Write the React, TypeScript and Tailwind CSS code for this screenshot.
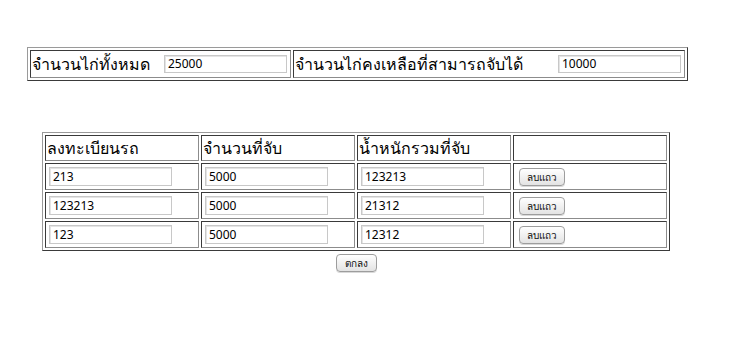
import React from 'react';

const rows = [
  { plate: '213', count: '5000', weight: '123213' },
  { plate: '123213', count: '5000', weight: '21312' },
  { plate: '123', count: '5000', weight: '12312' },
];

const cell = 'border border-t-[#3a3a3a] border-l-[#3a3a3a] border-b-[#8c8c8c] border-r-[#8c8c8c] p-px align-middle';
const table =
  'border-separate border-spacing-[2px] border border-t-[#9a9a9a] border-l-[#9a9a9a] border-b-[#3a3a3a] border-r-[#3a3a3a]';
const field =
  'm-[2px] h-[18px] w-[123px] border border-[#c8c8c8] bg-white px-[3px] text-[12px] text-black shadow-[inset_1px_1px_0_#e4e4e4] outline-none';

const Btn = ({ label, wide }: { label: string; wide?: boolean }) => (
  <button
    className={`block h-[18px] rounded-[4px] border border-[#9d9d9d] bg-gradient-to-b from-white to-[#e3e3e3] text-[10px] font-medium leading-none text-[#111] shadow-[0_1px_0_#d9d9d9] ${
      wide ? 'px-[8px]' : 'px-[7px]'
    }`}
  >
    {label}
  </button>
);

export default function App() {
  return (
    <div className="min-h-[344px] bg-white pt-[47px] text-black [font-family:'Noto_Sans','DejaVu_Sans',sans-serif]">
      {/* summary */}
      <table className={`${table} ml-[27px] w-[660px]`}>
        <tbody>
          <tr>
            <td className={`${cell} w-[260px] h-[28px]`}>
              <div className="flex items-center">
                <span className="w-[130px] text-[16px] font-medium leading-none">จำนวนไก่ทั้งหมด</span>
                <input className={`${field} ml-[2px]`} defaultValue="25000" readOnly />
              </div>
            </td>
            <td className={cell}>
              <div className="flex items-center">
                <span className="w-[261px] text-[16px] font-medium leading-none">จำนวนไก่คงเหลือที่สามารถจับได้</span>
                <input className={field} defaultValue="10000" readOnly />
              </div>
            </td>
          </tr>
        </tbody>
      </table>

      {/* catches */}
      <table className={`${table} ml-[42px] mt-[51px] w-[628px]`}>
        <tbody>
          <tr className="h-[26px]">
            {['ลงทะเบียนรถ', 'จำนวนที่จับ', 'น้ำหนักรวมที่จับ', ''].map((h, i) => (
              <td key={i} className={`${cell} w-[154px] text-[16px] font-medium leading-none`}>
                {h}
              </td>
            ))}
          </tr>
          {rows.map((r, i) => (
            <tr key={i}>
              <td className={cell}>
                <input className={`${field} block h-[19px] border-[#b4b4b4]`} defaultValue={r.plate} readOnly />
              </td>
              <td className={cell}>
                <input className={`${field} block h-[19px] border-[#b4b4b4]`} defaultValue={r.count} readOnly />
              </td>
              <td className={cell}>
                <input className={`${field} block h-[19px] border-[#b4b4b4]`} defaultValue={r.weight} readOnly />
              </td>
              <td className={`${cell} pl-[5px]`}>
                <Btn label="ลบแถว" />
              </td>
            </tr>
          ))}
        </tbody>
      </table>

      <div className="ml-[336px] mt-[3px]">
        <Btn label="ตกลง" wide />
      </div>
    </div>
  );
}
